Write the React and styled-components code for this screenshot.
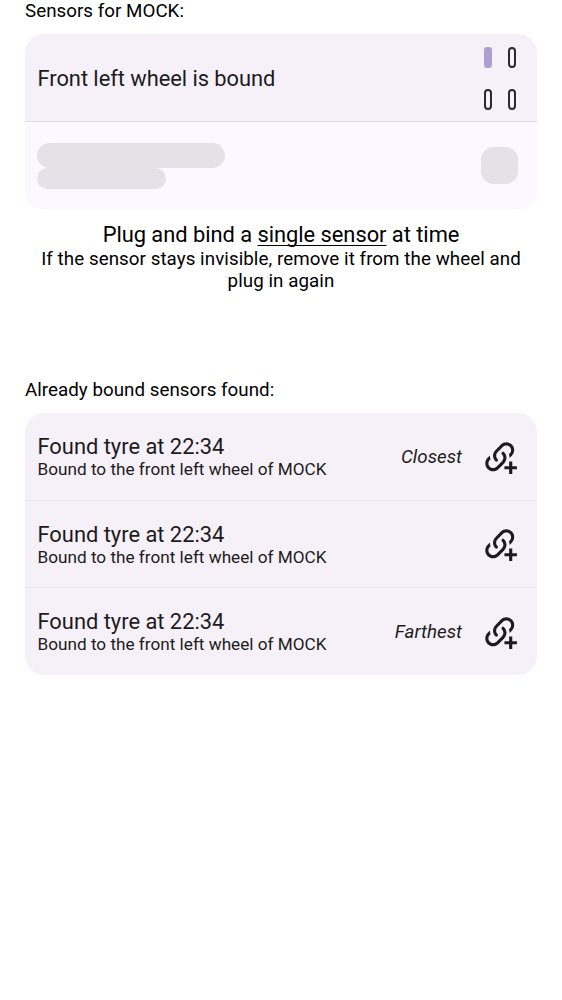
import React from "react";
import styled, { createGlobalStyle } from "styled-components";

const GlobalStyle = createGlobalStyle`
  * { box-sizing: border-box; }
  body {
    margin: 0;
    background: #fff;
    color: #000;
    font-family: Roboto, "Liberation Sans", sans-serif;
  }
`;

const Screen = styled.main`
  display: flex;
  flex-direction: column;
  width: 562px;
  height: 1000px;
  padding: 0 25px;
  overflow: hidden;
`;

const SectionLabel = styled.h2`
  margin: 0 0 ${(p) => p.$gap}px;
  font-size: 18.75px;
  line-height: 22px;
  font-weight: 400;
  letter-spacing: 0.03px;
`;

const Card = styled.section`
  width: 512px;
  border-radius: 19px;
  overflow: hidden;
  background: #f6f1f8;
`;

const Row = styled.div`
  display: flex;
  align-items: center;
  height: ${(p) => p.$height}px;
  padding: ${(p) => (p.$loading ? "0 19px 0 12.4px" : "0 18.5px 0 12.5px")};
  background: ${(p) => (p.$loading ? "#fdf7ff" : "transparent")};
  border-top: ${(p) => (p.$divider ? `1px solid ${p.$divider}` : "none")};
`;

const RowText = styled.div`
  flex: 1;
  display: flex;
  flex-direction: column;
`;

const Title = styled.span`
  padding-top: ${(p) => p.$top || 0}px;
  font-size: 21.875px;
  line-height: 25px;
  color: #1d1b20;
  letter-spacing: ${(p) => p.$spacing || 0}px;
`;

const Subtitle = styled.span`
  font-size: 17.1875px;
  line-height: 20px;
  color: #1d1b20;
`;

const Distance = styled.em`
  margin-right: 19px;
  font-size: 18.75px;
  line-height: 22px;
  color: #1d1b20;
`;

const Tyres = styled.div`
  display: grid;
  grid-template-columns: 8px 8px;
  grid-auto-rows: 21px;
  gap: 21px 16px;
  margin: 1px 2.5px 0 0;
`;

const Tyre = styled.span`
  border: 2px solid ${(p) => (p.$active ? "#ada0d0" : "#2b292e")};
  border-radius: ${(p) => (p.$active ? 3 : 4)}px;
  background: ${(p) => (p.$active ? "#ada0d0" : "transparent")};
`;

const Placeholder = styled.span`
  width: ${(p) => p.$width}px;
  height: ${(p) => p.$height}px;
  border-radius: 12.5px;
  background: #e6e1e6;
`;

const Hint = styled.div`
  display: flex;
  flex-direction: column;
  align-items: center;
  margin-top: 13px;
  height: 156.5px;
  text-align: center;
`;

const HintTitle = styled.p`
  margin: 0 0 0.5px;
  font-size: 21.875px;
  line-height: 25px;
  letter-spacing: -0.03px;
  u {
    text-decoration-thickness: 1px;
    text-underline-offset: 3px;
    text-decoration-skip-ink: none;
  }
`;

const HintBody = styled.p`
  margin: 0;
  font-size: 18.75px;
  line-height: 22px;
  letter-spacing: 0.06px;
`;

const Icon = styled.svg`
  display: block;
  width: 37.5px;
  height: 37.5px;
  fill: #1d1b20;
`;

const LinkPlus = () => (
  <Icon viewBox="0 0 24 24">
    <path d="M10.59,13.41C11,13.8 11,14.44 10.59,14.83C10.2,15.22 9.56,15.22 9.17,14.83C7.22,12.88 7.22,9.71 9.17,7.76L12.71,4.22C14.66,2.27 17.83,2.27 19.78,4.22C21.73,6.17 21.73,9.34 19.78,11.29L18.29,12.78C18.3,11.96 18.17,11.14 17.89,10.36L18.36,9.88C19.54,8.71 19.54,6.81 18.36,5.64C17.19,4.46 15.29,4.46 14.12,5.64L10.59,9.17C9.41,10.34 9.41,12.24 10.59,13.41M13.41,9.17C13.8,8.78 14.44,8.78 14.83,9.17C16.78,11.12 16.78,14.29 14.83,16.24L11.29,19.78C9.34,21.73 6.17,21.73 4.22,19.78C2.27,17.83 2.27,14.66 4.22,12.71L5.71,11.22C5.7,12.04 5.83,12.86 6.11,13.65L5.64,14.12C4.46,15.29 4.46,17.19 5.64,18.36C6.81,19.54 8.71,19.54 9.88,18.36L13.41,14.83C14.59,13.66 14.59,11.76 13.41,10.59C13,10.2 13,9.56 13.41,9.17Z" />
    <path d="M18,15V18H15V20H18V23H20V20H23V18H20V15Z" />
  </Icon>
);

const found = [
  { id: 1, distance: "Closest", height: 87 },
  { id: 2, height: 87 },
  { id: 3, distance: "Farthest", height: 88 },
];

export default function App() {
  return (
    <>
      <GlobalStyle />
      <Screen>
        <SectionLabel $gap={12}>Sensors for MOCK:</SectionLabel>
        <Card>
          <Row $height={87}>
            <RowText>
              <Title $spacing={-0.04} $top={2}>
                Front left wheel is bound
              </Title>
            </RowText>
            <Tyres>
              <Tyre $active />
              <Tyre />
              <Tyre />
              <Tyre />
            </Tyres>
          </Row>
          <Row $height={88} $loading $divider="#e0dbe4">
            <RowText>
              <Placeholder $width={187.6} $height={25} />
              <Placeholder $width={129} $height={21} />
            </RowText>
            <Placeholder $width={37} $height={37} />
          </Row>
        </Card>
        <Hint>
          <HintTitle>
            Plug and bind a <u>single sensor</u> at time
          </HintTitle>
          <HintBody>
            If the sensor stays invisible, remove it from the wheel and
            <br />
            plug in again
          </HintBody>
        </Hint>
        <SectionLabel $gap={12.5}>Already bound sensors found:</SectionLabel>
        <Card>
          {found.map(({ id, distance, height }, i) => (
            <Row key={id} $height={height} $divider={i > 0 && "#e9e4ec"}>
              <RowText>
                <Title>Found tyre at 22:34</Title>
                <Subtitle>Bound to the front left wheel of MOCK</Subtitle>
              </RowText>
              {distance && <Distance>{distance}</Distance>}
              <LinkPlus />
            </Row>
          ))}
        </Card>
      </Screen>
    </>
  );
}
